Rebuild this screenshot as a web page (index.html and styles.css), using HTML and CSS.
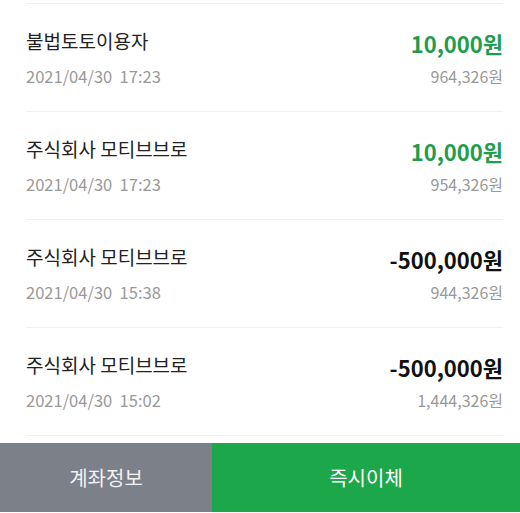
FILE: index.html
```html
<!DOCTYPE html>
<html>
<head>
    <title>거래내역</title>
    <meta charset="UTF-8">
    <link rel="stylesheet" href="styles.css">
</head>
<body>
    <div class="history">
        <div class="tx">
            <div class="tx-name">불법토토이용자</div>
            <div class="tx-amount plus">10,000원</div>
            <div class="tx-date">2021/04/30&nbsp;&nbsp;17:23</div>
            <div class="tx-balance">964,326원</div>
        </div>
        <div class="tx">
            <div class="tx-name">주식회사 모티브브로</div>
            <div class="tx-amount plus">10,000원</div>
            <div class="tx-date">2021/04/30&nbsp;&nbsp;17:23</div>
            <div class="tx-balance">954,326원</div>
        </div>
        <div class="tx">
            <div class="tx-name">주식회사 모티브브로</div>
            <div class="tx-amount">-500,000원</div>
            <div class="tx-date">2021/04/30&nbsp;&nbsp;15:38</div>
            <div class="tx-balance">944,326원</div>
        </div>
        <div class="tx">
            <div class="tx-name">주식회사 모티브브로</div>
            <div class="tx-amount">-500,000원</div>
            <div class="tx-date">2021/04/30&nbsp;&nbsp;15:02</div>
            <div class="tx-balance">1,444,326원</div>
        </div>
    </div>

    <div class="actions">
        <div class="btn btn-info">계좌정보</div>
        <div class="btn btn-send">즉시이체</div>
    </div>
</body>
</html>
```

FILE: styles.css
```css
* { margin: 0; padding: 0; box-sizing: border-box; }
body {
    background: #fff;
    font-family: "Noto Sans CJK KR", "Noto Sans", sans-serif;
    color: #222;
    width: 520px;
    height: 513px;
    overflow: hidden;
}
.history {
    margin: 3px 17px 0 26px;
    border-bottom: 1px solid #f0f0f0;
}
.tx {
    height: 108px;
    border-top: 1px solid #f0f0f0;
    padding-top: 18px;
    display: grid;
    grid-template-columns: 1fr auto;
    grid-template-rows: 36px 36px;
    align-items: center;
}
.tx-name {
    font-size: 19px;
    color: #222;
}
.tx-amount {
    font-size: 22px;
    font-weight: 700;
    color: #111;
    text-align: right;
    padding-top: 6px;
}
.tx-amount.plus { color: #1f9d4c; }
.tx-date {
    font-size: 16.5px;
    color: #999;
}
.tx-balance {
    font-size: 16px;
    color: #999;
    text-align: right;
}
.actions {
    margin-top: 7px;
    display: flex;
    height: 69px;
}
.btn {
    display: flex;
    align-items: center;
    justify-content: center;
    font-size: 20px;
}
.btn-info {
    width: 212px;
    background: #7b8089;
    color: #f2f2f2;
}
.btn-send {
    flex: 1;
    background: #1ba74a;
    color: #fff;
}
```
